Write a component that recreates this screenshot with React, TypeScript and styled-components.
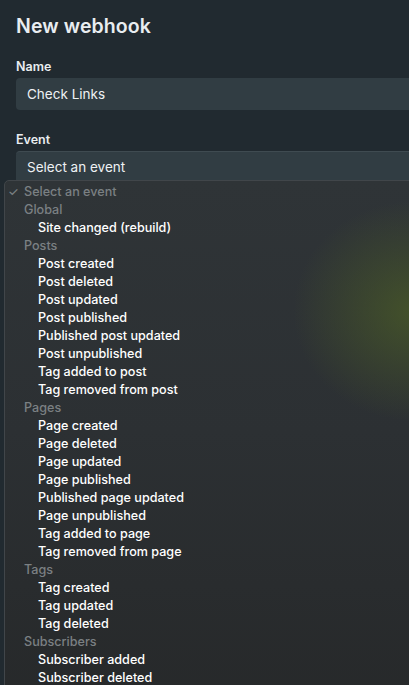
import styled, { createGlobalStyle } from "styled-components";

const GlobalStyle = createGlobalStyle`
  html, body {
    margin: 0;
    padding: 0;
    background: #212a30;
    overflow: hidden;
  }
  body {
    font-family: Inter, "Liberation Sans", sans-serif;
    -webkit-font-smoothing: antialiased;
  }
`;

type Item = { label: string; kind: "placeholder" | "group" | "option" };

const items: Item[] = [
  { label: "Select an event", kind: "placeholder" },
  { label: "Global", kind: "group" },
  { label: "Site changed (rebuild)", kind: "option" },
  { label: "Posts", kind: "group" },
  { label: "Post created", kind: "option" },
  { label: "Post deleted", kind: "option" },
  { label: "Post updated", kind: "option" },
  { label: "Post published", kind: "option" },
  { label: "Published post updated", kind: "option" },
  { label: "Post unpublished", kind: "option" },
  { label: "Tag added to post", kind: "option" },
  { label: "Tag removed from post", kind: "option" },
  { label: "Pages", kind: "group" },
  { label: "Page created", kind: "option" },
  { label: "Page deleted", kind: "option" },
  { label: "Page updated", kind: "option" },
  { label: "Page published", kind: "option" },
  { label: "Published page updated", kind: "option" },
  { label: "Page unpublished", kind: "option" },
  { label: "Tag added to page", kind: "option" },
  { label: "Tag removed from page", kind: "option" },
  { label: "Tags", kind: "group" },
  { label: "Tag created", kind: "option" },
  { label: "Tag updated", kind: "option" },
  { label: "Tag deleted", kind: "option" },
  { label: "Subscribers", kind: "group" },
  { label: "Subscriber added", kind: "option" },
  { label: "Subscriber deleted", kind: "option" },
];

export default function App() {
  return (
    <Page>
      <GlobalStyle />
      <Title>New webhook</Title>
      <Field>
        <Label>Name</Label>
        <Input>Check Links</Input>
      </Field>
      <Field>
        <Label>Event</Label>
        <Select>Select an event</Select>
      </Field>
      <Menu>
        {items.map((item) => (
          <Row key={item.label} $kind={item.kind}>
            {item.kind === "placeholder" && <Check>✓</Check>}
            {item.label}
          </Row>
        ))}
      </Menu>
    </Page>
  );
}

const Page = styled.div`
  position: relative;
  width: 409px;
  height: 685px;
  overflow: hidden;
  padding: 14px 0 0 16px;
  box-sizing: border-box;
  display: flex;
  flex-direction: column;
  gap: 17px;
  color: #e9edf0;
`;

const Title = styled.h1`
  margin: 0 0 4px;
  font-size: 19.5px;
  font-weight: 600;
  line-height: 24px;
  letter-spacing: 0.1px;
`;

const Field = styled.div`
  display: flex;
  flex-direction: column;
  gap: 4px;
  margin-bottom: 5px;
  width: 560px;
`;

const Label = styled.label`
  font-size: 12.5px;
  font-weight: 600;
  line-height: 15px;
`;

const Input = styled.div`
  height: 32px;
  border-radius: 4px;
  background: #313d43;
  display: flex;
  align-items: center;
  padding: 0 11px;
  font-size: 13.5px;
  color: #eef1f3;
`;

const Select = styled(Input)`
  border-top: 1px solid #3f4b51;
  box-sizing: border-box;
  height: 40px;
  align-items: flex-start;
  padding-top: 7px;
`;

const Menu = styled.div`
  position: absolute;
  top: 180px;
  left: 4px;
  width: 560px;
  height: 560px;
  box-sizing: border-box;
  padding: 2px 0;
  border: 1px solid #41464a;
  border-radius: 5px;
  background:
    radial-gradient(ellipse 120px 110px at 408px 130px, rgba(80, 100, 36, 0.62), rgba(80, 100, 36, 0) 100%),
    linear-gradient(180deg, #2f3437 0%, #2c3033 45%, #262829 100%);
`;

const Row = styled.div<{ $kind: Item["kind"] }>`
  position: relative;
  height: 18px;
  line-height: 18px;
  font-size: 12.6px;
  font-weight: 500;
  white-space: nowrap;
  padding-left: ${(p) => (p.$kind === "option" ? "33px" : "19px")};
  color: ${(p) => (p.$kind === "option" ? "#ffffff" : "#7b8083")};
`;

const Check = styled.span`
  position: absolute;
  left: 3px;
  top: 0;
  font-size: 12px;
  color: #7b8083;
`;
